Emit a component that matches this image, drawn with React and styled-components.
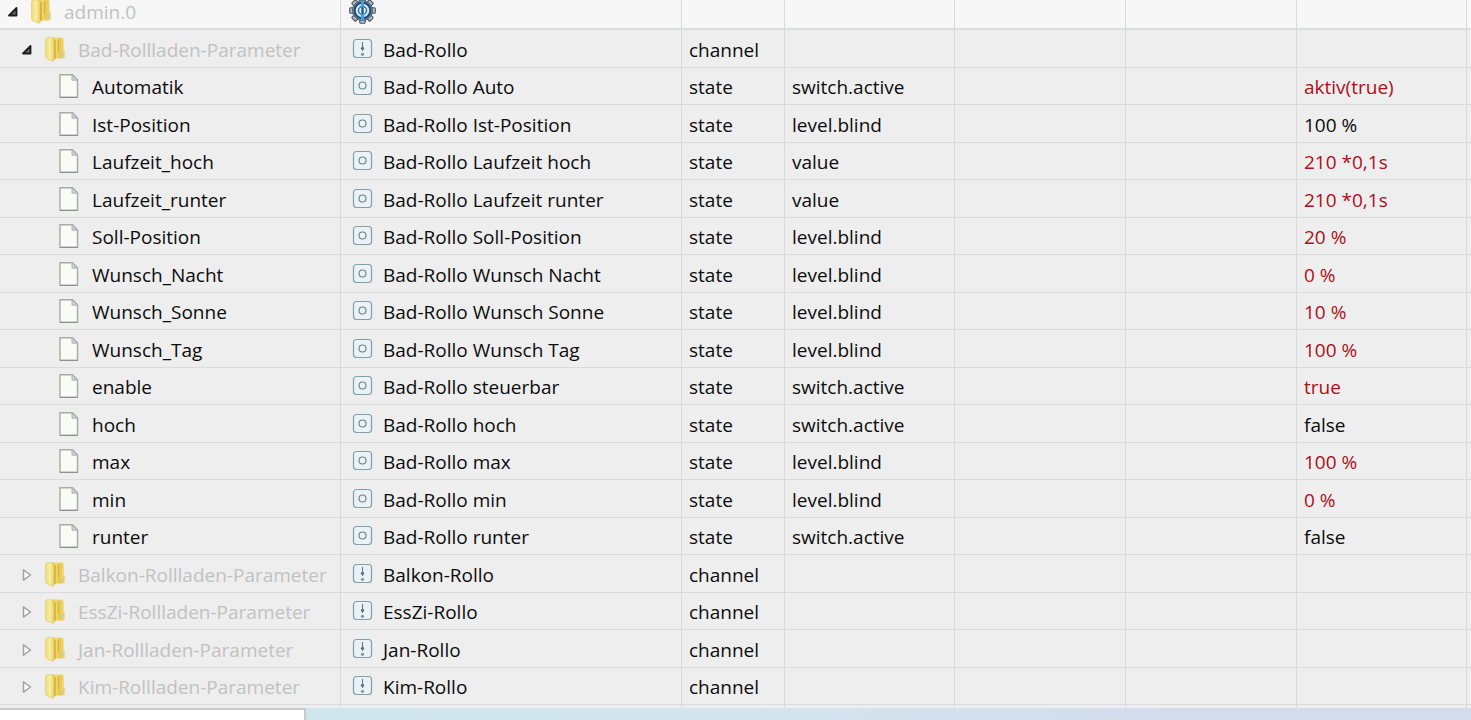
import React, {useState} from 'react'
import styled, {createGlobalStyle} from 'styled-components'

const GlobalStyle = createGlobalStyle`
  * {
    box-sizing: border-box;
  }
  body {
    margin: 0;
    background: #eee;
    color: #0c0c0c;
    font-family: "Open Sans", "Noto Sans", sans-serif;
    font-size: 19px;
    line-height: 24px;
  }
`

const Page = styled.div`
  height: 100vh;
  display: flex;
  flex-direction: column;
  overflow: hidden;
`

// the list is anchored at its lower end, older rows run out at the top
const Viewport = styled.main`
  flex: 1;
  min-height: 0;
  display: flex;
  flex-direction: column;
  justify-content: flex-end;
  overflow: hidden;
`

const Table = styled.table`
  width: 100%;
  flex: none;
  table-layout: fixed;
  border-collapse: separate;
  border-spacing: 0;
`

const Col = styled.col`
  width: ${({$width}) => $width ? `${$width}px` : 'auto'};
`

const Row = styled.tr`
  height: 38px;
  background: ${({$root}) => $root ? '#f7f7f7' : '#eee'};
  &:nth-child(odd) {
    height: 37px;
  }
`

const Td = styled.td`
  padding: 2px 0 0 7px;
  border-right: 1px solid #d9dadb;
  border-bottom: ${({$root}) => $root ? '2px solid #dadddc' : '1px solid #dadbdc'};
  color: ${({$changed}) => $changed ? '#ac0f18' : 'inherit'};
  white-space: nowrap;
  overflow: hidden;
  &:last-child {
    border-right: 0;
  }
`

const TailRow = styled.tr`
  height: 3px;
  td {
    padding: 0;
    border-bottom: 0;
  }
`

const TreeCell = styled.div`
  display: flex;
  align-items: center;
  padding-left: ${({$level}) => $level * 14}px;
  color: ${({$folder}) => $folder ? '#c1c1c1' : 'inherit'};
`

const NameCell = styled.div`
  display: flex;
  align-items: center;
  gap: 7px;
  padding-left: 1px;
`

const Expander = styled.button`
  width: 12px;
  height: 24px;
  margin-right: 11px;
  padding: 0;
  border: 0;
  background: none;
  display: flex;
  align-items: center;
  cursor: pointer;
`

const Spacer = styled.span`
  width: 23px;
`

const Icon = styled.svg`
  flex: none;
  display: block;
  margin-right: ${({$gap}) => $gap || 0}px;
`

const Footer = styled.footer`
  height: 12px;
  display: flex;
  background: linear-gradient(90deg, #cfe6ee 20%, #d3e4ee 50%, #d3dcec 80%);
`

const StatusPane = styled.div`
  width: 306px;
  background: #fff;
  border-top: 2px solid #c9c9cb;
  border-right: 2px solid #c9c9cb;
`

const Arrow = ({open}) => (
  <Icon width='12' height='14' viewBox='0 0 12 14'>
    {open
      ? <path d='M9.500 3v7.500H2z' fill='#666' stroke='#1c1c1c' strokeWidth='1.800' strokeLinejoin='round' />
      : <path d='M2.500 1.800v10.400L9.500 7z' fill='#fafafa' stroke='#a2a2a2' strokeWidth='1.500' strokeLinejoin='round' />}
  </Icon>
)

const FolderIcon = () => (
  <Icon $gap={12} width='22' height='26' viewBox='0 0 22 26'>
    <defs>
      <linearGradient id='back' x1='0' x2='1'>
        <stop offset='0' stopColor='#d9b23a' />
        <stop offset='.25' stopColor='#f2da70' />
        <stop offset='.6' stopColor='#e8c84e' />
        <stop offset='1' stopColor='#efd87c' />
      </linearGradient>
      <linearGradient id='front' x1='0' x2='1'>
        <stop offset='0' stopColor='#f0dc74' />
        <stop offset='.5' stopColor='#f8eca4' />
        <stop offset='1' stopColor='#e3c348' />
      </linearGradient>
    </defs>
    <path d='M8 .8h9.500q2 0 2 2v9l1.300 2.200v5q0 2.500-2.500 2.500H8z' fill='url(#back)' stroke='#ecdc98' strokeWidth='.6' />
    <path d='M3.500.6 9.500 1q1.500.5 1.500 3v17.500q-.3 2.500-2.500 2.800L3.500 22q-2-.6-2-2.500V3q0-2 2-2.400z' fill='url(#front)' stroke='#dfc664' strokeWidth='.6' />
    <path d='M11 3.500v18' stroke='#c79e35' strokeWidth='1' />
    <path d='M14.500 3v12' stroke='#d8b23c' strokeWidth='1' />
    <path d='M18.800 15v4.500' stroke='#c3d0b0' strokeWidth='2' />
  </Icon>
)

const FileIcon = () => (
  <Icon $gap={12} width='22' height='26' viewBox='0 0 22 26'>
    <path d='M2 .7h12.500l5 5v17.600H2z' fill='#f9fbf6' stroke='#a8aaa8' strokeWidth='1.400' />
    <path d='M14 .7v5.500h5.500z' fill='#cfd1ce' stroke='#b0b2b0' strokeWidth='1' />
    <path d='M2 23.500h17.800' stroke='#8e908d' strokeWidth='1' />
  </Icon>
)

const ChannelIcon = () => (
  <Icon width='27' height='24' viewBox='0 0 27 24'>
    <rect x='4.500' y='1.500' width='18' height='18' rx='3' fill='#eaf2f5' stroke='#82a0ac' strokeWidth='1.200' />
    <path d='M13.500 4v9' stroke='#5b7c8a' strokeWidth='1.100' />
    <circle cx='13.500' cy='10.300' r='1.600' fill='#4e7284' />
    <circle cx='13.500' cy='16.300' r='1.600' fill='#7c9ba8' />
  </Icon>
)

const StateIcon = () => (
  <Icon width='27' height='24' viewBox='0 0 27 24'>
    <rect x='4.500' y='1.500' width='18' height='18' rx='3' fill='#eaf2f5' stroke='#82a0ac' strokeWidth='1.200' />
    <circle cx='13.500' cy='10.500' r='3.500' fill='none' stroke='#6b8794' strokeWidth='1.200' />
  </Icon>
)

const teeth = [0, 45, 90, 135, 180, 225, 270, 315]

const InstanceIcon = () => (
  <Icon width='27' height='30' viewBox='0 0 27 30'>
    {teeth.map((angle) => (
      <rect key={angle} x='10.800' y='.7' width='5.400' height='5' rx='1' fill='#b4bfca' stroke='#4a5361' strokeWidth='1.100' transform={`rotate(${angle} 13.500 13.500)`} />
    ))}
    <circle cx='13.500' cy='13.500' r='10' fill='#b4bfca' stroke='#4a5361' strokeWidth='1' />
    <circle cx='13.500' cy='13.500' r='8' fill='#d6e6f3' stroke='#234f80' strokeWidth='2.400' />
    <circle cx='13.500' cy='13.500' r='4' fill='#eef5fa' stroke='#3c6c98' strokeWidth='1.500' />
    <path d='M13.500 3.500v20' stroke='#45a3da' strokeWidth='3' />
    <path d='M13.500 10v7' stroke='#215680' strokeWidth='1.400' />
  </Icon>
)

const states = [
  {id: 'Automatik', name: 'Bad-Rollo Auto', role: 'switch.active', value: 'aktiv(true)', changed: true},
  {id: 'Ist-Position', name: 'Bad-Rollo Ist-Position', role: 'level.blind', value: '100 %'},
  {id: 'Laufzeit_hoch', name: 'Bad-Rollo Laufzeit hoch', role: 'value', value: '210 *0,1s', changed: true},
  {id: 'Laufzeit_runter', name: 'Bad-Rollo Laufzeit runter', role: 'value', value: '210 *0,1s', changed: true},
  {id: 'Soll-Position', name: 'Bad-Rollo Soll-Position', role: 'level.blind', value: '20 %', changed: true},
  {id: 'Wunsch_Nacht', name: 'Bad-Rollo Wunsch Nacht', role: 'level.blind', value: '0 %', changed: true},
  {id: 'Wunsch_Sonne', name: 'Bad-Rollo Wunsch Sonne', role: 'level.blind', value: '10 %', changed: true},
  {id: 'Wunsch_Tag', name: 'Bad-Rollo Wunsch Tag', role: 'level.blind', value: '100 %', changed: true},
  {id: 'enable', name: 'Bad-Rollo steuerbar', role: 'switch.active', value: 'true', changed: true},
  {id: 'hoch', name: 'Bad-Rollo hoch', role: 'switch.active', value: 'false'},
  {id: 'max', name: 'Bad-Rollo max', role: 'level.blind', value: '100 %', changed: true},
  {id: 'min', name: 'Bad-Rollo min', role: 'level.blind', value: '0 %', changed: true},
  {id: 'runter', name: 'Bad-Rollo runter', role: 'switch.active', value: 'false'}
]

const rows = [
  {id: 'admin.0', level: 0, kind: 'instance'},
  {id: 'Bad-Rollladen-Parameter', name: 'Bad-Rollo', level: 1, kind: 'channel'},
  ...states.map((state) => ({...state, level: 2, kind: 'state', parent: 'Bad-Rollladen-Parameter'})),
  {id: 'Balkon-Rollladen-Parameter', name: 'Balkon-Rollo', level: 1, kind: 'channel'},
  {id: 'EssZi-Rollladen-Parameter', name: 'EssZi-Rollo', level: 1, kind: 'channel'},
  {id: 'Jan-Rollladen-Parameter', name: 'Jan-Rollo', level: 1, kind: 'channel'},
  {id: 'Kim-Rollladen-Parameter', name: 'Kim-Rollo', level: 1, kind: 'channel'}
]

const icons = {
  instance: InstanceIcon,
  channel: ChannelIcon,
  state: StateIcon
}

const widths = [341, 341, 103, 170, null, null, 170, 4]

const ObjectRow = ({row, open, onToggle}) => {
  const {id, name, level, kind, role, value, changed} = row
  const root = kind === 'instance'
  const folder = kind !== 'state'
  const KindIcon = icons[kind]
  return (
    <Row $root={root}>
      <Td $root={root}>
        <TreeCell $level={level} $folder={folder}>
          {folder
            ? <Expander type='button' aria-label={id} aria-expanded={open} onClick={() => onToggle(id)}><Arrow open={open} /></Expander>
            : <Spacer />}
          {folder ? <FolderIcon /> : <FileIcon />}
          <span>{id}</span>
        </TreeCell>
      </Td>
      <Td $root={root}>
        <NameCell>
          <KindIcon />
          <span>{name}</span>
        </NameCell>
      </Td>
      <Td $root={root}>{root ? '' : kind}</Td>
      <Td $root={root}>{role}</Td>
      <Td $root={root} />
      <Td $root={root} />
      <Td $root={root} $changed={changed}>{value}</Td>
      <Td $root={root} />
    </Row>
  )
}

export default function App () {
  const [opened, setOpened] = useState(['admin.0', 'Bad-Rollladen-Parameter'])
  const toggle = (id) => setOpened(opened.includes(id) ? opened.filter((item) => item !== id) : [...opened, id])
  const visible = rows.filter(({level, parent}) => level === 0 || (opened.includes('admin.0') && (!parent || opened.includes(parent))))
  return (
    <Page>
      <GlobalStyle />
      <Viewport>
        <Table>
          <colgroup>
            {widths.map((width, i) => <Col key={i} $width={width} />)}
          </colgroup>
          <tbody>
            {visible.map((row) => <ObjectRow key={row.id} row={row} open={opened.includes(row.id)} onToggle={toggle} />)}
            <TailRow>
              {widths.map((width, i) => <Td key={i} />)}
            </TailRow>
          </tbody>
        </Table>
      </Viewport>
      <Footer>
        <StatusPane />
      </Footer>
    </Page>
  )
}
